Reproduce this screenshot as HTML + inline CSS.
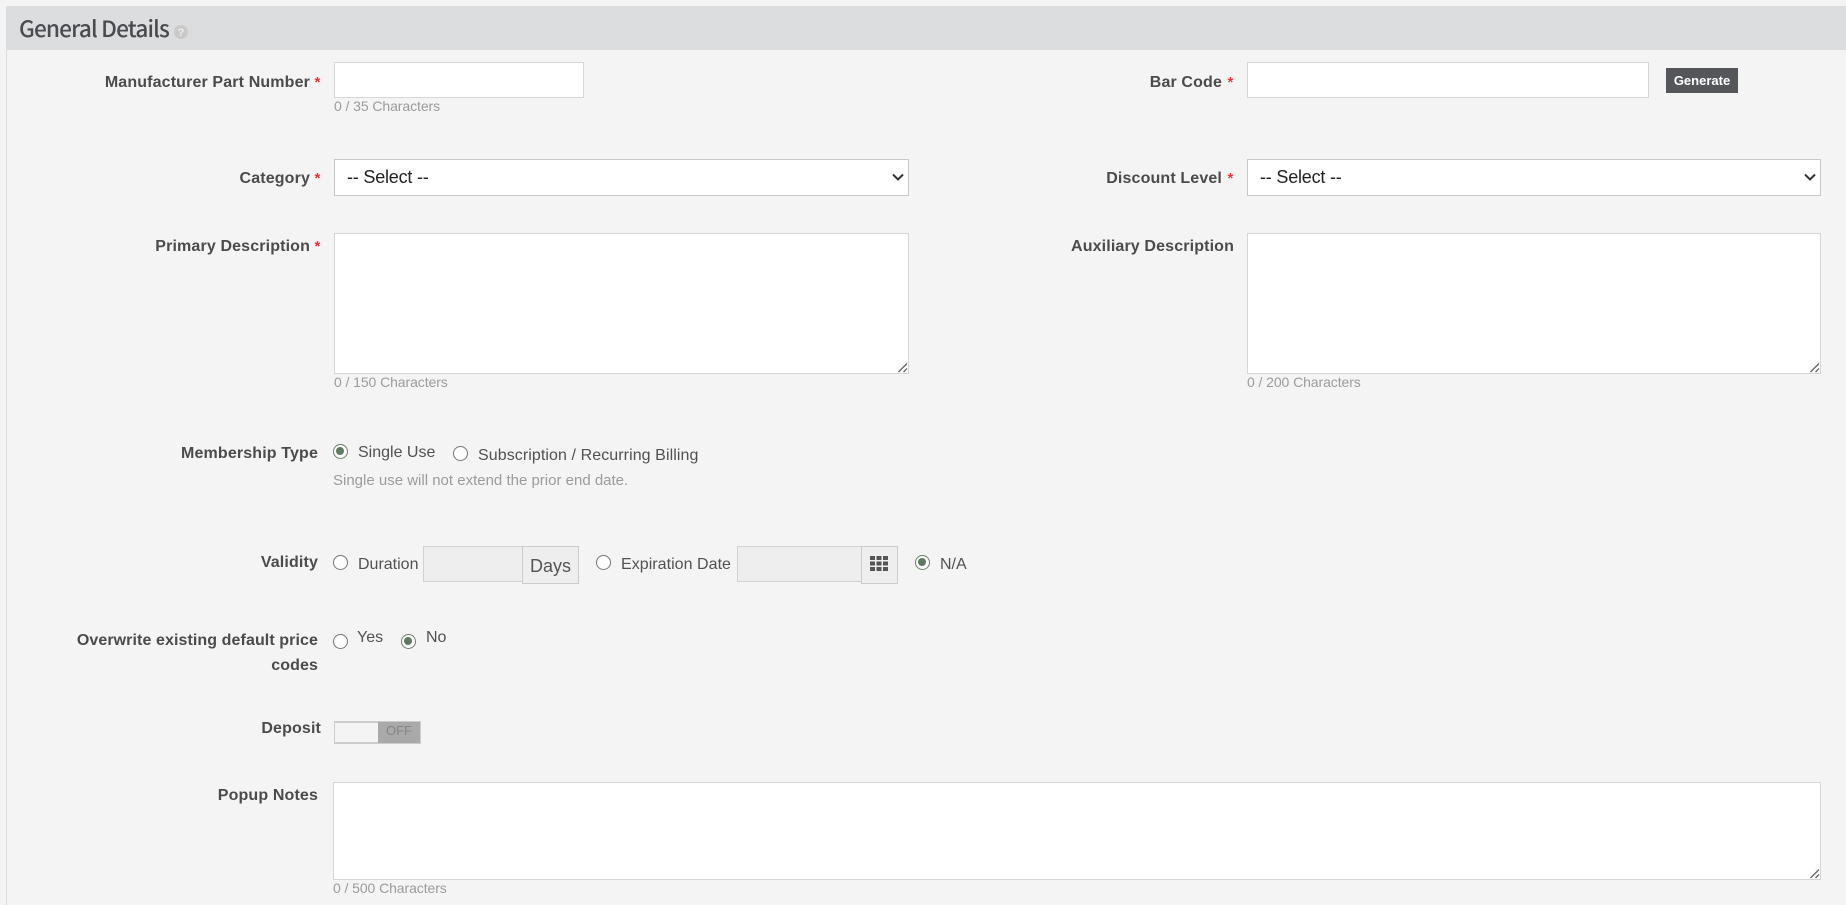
<!DOCTYPE html>
<html lang="en">
<head>
<meta charset="utf-8">
<title>General Details</title>
<style>
html,body{margin:0;padding:0;background:#f4f4f4;}
body{width:1846px;height:905px;overflow:hidden;position:relative;font-family:"Liberation Sans",sans-serif;color:#4b4b4b;}
.a{position:absolute;white-space:nowrap;}
.hdr{left:6px;top:6px;width:1840px;height:44px;background:#dcdddf;}
.side{left:6px;top:50px;width:1px;height:855px;background:#ddd;}
.title{left:19px;top:10px;font-family:"Noto Sans CJK JP","Liberation Sans",sans-serif;font-size:22.6px;line-height:36px;font-weight:500;color:#4a4b4f;letter-spacing:-.85px;}
.lb{font-size:16px;font-weight:700;line-height:24px;text-align:right;color:#4b4b4b;letter-spacing:.14px;}
.st{color:#ee3344;font-weight:700;font-size:15px;line-height:24px;}
.box{background:#fff;border:1px solid #d6d6d6;box-sizing:border-box;}
.sel{background:#fff;border:1px solid #c8c8c8;box-sizing:border-box;font-size:18px;line-height:35px;padding-left:12px;color:#222;letter-spacing:-.2px;}
.cnt{font-size:14px;line-height:16px;color:#9b9b9b;letter-spacing:-.08px;}
.t{font-size:16px;line-height:20px;color:#515151;}
.r{width:15px;height:15px;border-radius:50%;box-sizing:border-box;border:1px solid #767676;background:#fff;}
.c{width:15px;height:15px;border-radius:50%;box-sizing:border-box;border:1.5px solid #6a7f6a;background:#fff;}
.c:after{content:"";position:absolute;left:2px;top:2px;width:8px;height:8px;border-radius:50%;background:#5f7a5f;}
.ro{background:#eee;border:1px solid #d2d2d2;box-sizing:border-box;}
.ad{background:#eee;border:1px solid #ccc;box-sizing:border-box;text-align:center;color:#555;}
svg{position:absolute;display:block;}
.rz{position:absolute;right:0;bottom:0;width:11px;height:11px;}
</style>
</head>
<body>
<div class="a hdr"></div>
<div class="a side"></div>
<div class="a title">General Details</div>
<svg style="left:174px;top:25px" width="14" height="14" viewBox="0 0 14 14"><circle cx="7" cy="7" r="7" fill="#c9c9c9"/><text x="7" y="11" text-anchor="middle" font-family="Liberation Sans" font-size="11" font-weight="700" fill="#eeeeee">?</text></svg>

<div class="a lb" style="right:1536px;top:71px">Manufacturer Part Number</div>
<div class="a st" style="left:314.5px;top:71px">*</div>
<div class="a box" style="left:334px;top:62px;width:250px;height:36px"></div>
<div class="a cnt" style="left:334px;top:98px">0 / 35 Characters</div>

<div class="a lb" style="right:624px;top:71px">Bar Code</div>
<div class="a st" style="left:1227.5px;top:71px">*</div>
<div class="a box" style="left:1247px;top:62px;width:402px;height:36px"></div>
<div class="a" style="left:1666px;top:68px;width:72px;height:25px;background:#54565a;color:#fff;font-size:13px;font-weight:700;line-height:25px;text-align:center">Generate</div>

<div class="a lb" style="right:1536px;top:167px">Category</div>
<div class="a st" style="left:314.5px;top:167px">*</div>
<div class="a sel" style="left:334px;top:159px;width:575px;height:37px">-- Select --</div>
<svg style="left:892px;top:173px" width="12" height="9" viewBox="0 0 12 9"><path d="M1 1.5L6 6.5L11 1.5" fill="none" stroke="#333" stroke-width="2"/></svg>

<div class="a lb" style="right:624px;top:167px">Discount Level</div>
<div class="a st" style="left:1227.5px;top:167px">*</div>
<div class="a sel" style="left:1247px;top:159px;width:574px;height:37px">-- Select --</div>
<svg style="left:1804px;top:173px" width="12" height="9" viewBox="0 0 12 9"><path d="M1 1.5L6 6.5L11 1.5" fill="none" stroke="#333" stroke-width="2"/></svg>

<div class="a lb" style="right:1536px;top:235px">Primary Description</div>
<div class="a st" style="left:314.5px;top:235px">*</div>
<div class="a box" style="left:334px;top:233px;width:575px;height:141px"><svg class="rz" style="left:auto" viewBox="0 0 11 11"><path d="M1.5 10L10 1.5M6.5 10L10 6.5" stroke="#666" stroke-width="1.3"/></svg></div>
<div class="a cnt" style="left:334px;top:374px">0 / 150 Characters</div>

<div class="a lb" style="right:612px;top:235px">Auxiliary Description</div>
<div class="a box" style="left:1247px;top:233px;width:574px;height:141px"><svg class="rz" style="left:auto" viewBox="0 0 11 11"><path d="M1.5 10L10 1.5M6.5 10L10 6.5" stroke="#666" stroke-width="1.3"/></svg></div>
<div class="a cnt" style="left:1247px;top:374px">0 / 200 Characters</div>

<div class="a lb" style="right:1528px;top:442px">Membership Type</div>
<div class="a c" style="left:333px;top:444px"></div>
<div class="a t" style="left:358px;top:443px">Single Use</div>
<div class="a r" style="left:453px;top:446px"></div>
<div class="a t" style="left:478px;top:446px;letter-spacing:.08px">Subscription / Recurring Billing</div>
<div class="a" style="left:333px;top:472px;font-size:15px;line-height:18px;color:#9b9b9b">Single use will not extend the prior end date.</div>

<div class="a lb" style="right:1528px;top:550.5px">Validity</div>
<div class="a r" style="left:333px;top:555px"></div>
<div class="a t" style="left:358px;top:555px">Duration</div>
<div class="a ro" style="left:423px;top:546px;width:100px;height:36px"></div>
<div class="a ad" style="left:522px;top:546px;width:57px;height:38px;font-size:18px;line-height:38px">Days</div>
<div class="a r" style="left:596px;top:555px"></div>
<div class="a t" style="left:621px;top:555px;letter-spacing:.04px">Expiration Date</div>
<div class="a ro" style="left:737px;top:546px;width:126px;height:36px"></div>
<div class="a ad" style="left:861px;top:546px;width:37px;height:38px"></div>
<svg style="left:870px;top:556px" width="18" height="15" viewBox="0 0 18 15" fill="#555"><rect x="0" y="0" width="5" height="4"/><rect x="6.5" y="0" width="5" height="4"/><rect x="13" y="0" width="5" height="4"/><rect x="0" y="5.5" width="5" height="4"/><rect x="6.5" y="5.5" width="5" height="4"/><rect x="13" y="5.5" width="5" height="4"/><rect x="0" y="11" width="5" height="4"/><rect x="6.5" y="11" width="5" height="4"/><rect x="13" y="11" width="5" height="4"/></svg>
<div class="a c" style="left:915px;top:555px"></div>
<div class="a t" style="left:940px;top:555px">N/A</div>

<div class="a lb" style="right:1528px;top:629px;letter-spacing:.09px">Overwrite existing default price<br><span style="line-height:26px">codes</span></div>
<div class="a r" style="left:333px;top:634px"></div>
<div class="a t" style="left:357px;top:628px">Yes</div>
<div class="a c" style="left:401px;top:634px"></div>
<div class="a t" style="left:426px;top:628px">No</div>

<div class="a lb" style="right:1525px;top:717px">Deposit</div>
<div class="a" style="left:334px;top:721px;width:87px;height:23px;box-sizing:border-box;border:2px solid #ccc;border-left-width:1px;background:#f4f4f4"></div>
<div class="a" style="left:378px;top:722px;width:42px;height:21px;background:#a9a9a9;color:#858585;font-size:13px;line-height:18px;text-align:center">OFF</div>

<div class="a lb" style="right:1528px;top:784px">Popup Notes</div>
<div class="a box" style="left:333px;top:782px;width:1488px;height:98px"><svg class="rz" style="left:auto" viewBox="0 0 11 11"><path d="M1.5 10L10 1.5M6.5 10L10 6.5" stroke="#666" stroke-width="1.3"/></svg></div>
<div class="a cnt" style="left:333px;top:880px">0 / 500 Characters</div>
</body>
</html>
